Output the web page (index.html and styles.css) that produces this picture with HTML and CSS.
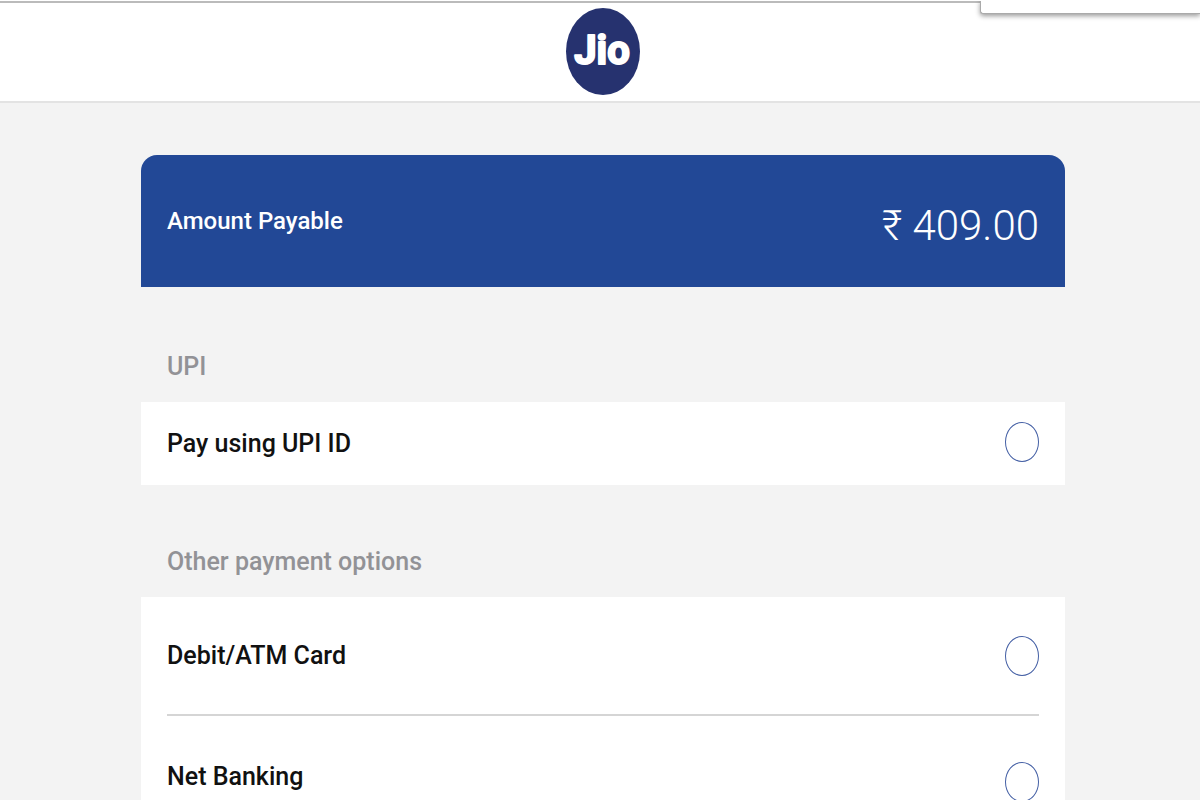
FILE: index.html
```
<!DOCTYPE html>
<html lang="en">
<head>
    <meta charset="UTF-8">
    <meta name="viewport" content="width=device-width, initial-scale=1.0">
    <title>Jio Payment</title>
    <link rel="stylesheet" href="styles.css">
</head>
<body>
    <div class="page">
        <!-- Header -->
        <header class="top-bar">
            <svg class="logo" viewBox="0 0 74 87" role="img" aria-label="Jio">
                <ellipse cx="37" cy="43.5" rx="37" ry="43.5"/>
                <text x="36" y="56" text-anchor="middle">Jio</text>
            </svg>
        </header>
        <div class="popup"></div>

        <main class="content">
            <div class="amount-box">
                <span class="amount-label">Amount Payable</span>
                <span class="amount-value">₹ 409.00</span>
            </div>

            <form>
                <!-- UPI -->
                <h2 class="section-title">UPI</h2>
                <div class="card">
                    <div class="option option-small">
                        <label for="upi">Pay using UPI ID</label>
                        <input type="radio" id="upi" name="payment">
                    </div>
                </div>

                <!-- Other options -->
                <h2 class="section-title">Other payment options</h2>
                <div class="card">
                    <div class="option">
                        <label for="debit">Debit/ATM Card</label>
                        <input type="radio" id="debit" name="payment">
                    </div>
                    <div class="option option-tall">
                        <label for="netbanking">Net Banking</label>
                        <input type="radio" id="netbanking" name="payment">
                    </div>
                </div>
            </form>
        </main>
    </div>
</body>
</html>
```
FILE: styles.css
```
* {
    box-sizing: border-box;
}
body {
    margin: 0;
    font-family: Roboto, "Liberation Sans", sans-serif;
    font-size: 25px;
    font-weight: 500;
    line-height: 30px;
    color: #111;
    background-color: #f3f3f3;
}
.page {
    position: relative;
    height: 100vh;
    overflow: hidden;
    border-top: 1px solid #fff;
}
.top-bar {
    display: flex;
    justify-content: center;
    padding: 5px 0 6px 6px;
    background-color: #fff;
    border-top: 2px solid #bbb;
    border-bottom: 2px solid #e3e3e3;
}
.logo {
    display: block;
    width: 74px;
    height: 87px;
}
.logo ellipse {
    fill: #26326f;
}
.logo text {
    font-family: Roboto, sans-serif;
    font-size: 40px;
    font-weight: 700;
    fill: #fff;
    stroke: #fff;
    stroke-width: 2px;
    stroke-linejoin: round;
}
/* Panel hanging over the top right corner */
.popup {
    position: absolute;
    top: -1px;
    right: 0;
    width: 220px;
    height: 14px;
    background-color: #fff;
    border: 1px solid #aaa;
    border-width: 0 0 1px 1px;
    border-radius: 0 0 0 3px;
    box-shadow: 0 2px 5px rgba(0, 0, 0, 0.4);
}
.content {
    width: 77%;
    margin: 0 auto;
    padding-top: 52px;
    position: relative;
    left: 3px;
}
.amount-box {
    display: flex;
    justify-content: space-between;
    align-items: center;
    height: 132px;
    margin-bottom: 3px;
    padding: 0 26px;
    color: #fff;
    background-color: #224896;
    border-radius: 16px 16px 0 0;
}
.amount-label {
    font-size: 24px;
}
.amount-value {
    padding-top: 10px;
    font-size: 42px;
    font-weight: 300;
    line-height: 50px;
}
.section-title {
    margin: 0;
    padding: 62px 26px 20px;
    font-size: 25px;
    font-weight: 500;
    line-height: 30px;
    color: #929296;
}
.card {
    background-color: #fff;
    padding: 0 26px;
}
.option {
    display: flex;
    justify-content: space-between;
    align-items: center;
    height: 119px;
    border-bottom: 2px solid #d5d5d5;
}
.option:last-child {
    border-bottom: none;
}
.option-small {
    height: 83px;
}
.option-tall {
    height: 132px;
}
.option-tall label {
    padding-bottom: 10px;
}
.option input {
    appearance: none;
    width: 34px;
    height: 40px;
    margin: 0;
    background-color: #fff;
    border: 1px solid #4560a5;
    border-radius: 50%;
    cursor: pointer;
}
.option-small input {
    margin-bottom: 4px;
}
.option input:checked {
    background-color: #224896;
}
```
